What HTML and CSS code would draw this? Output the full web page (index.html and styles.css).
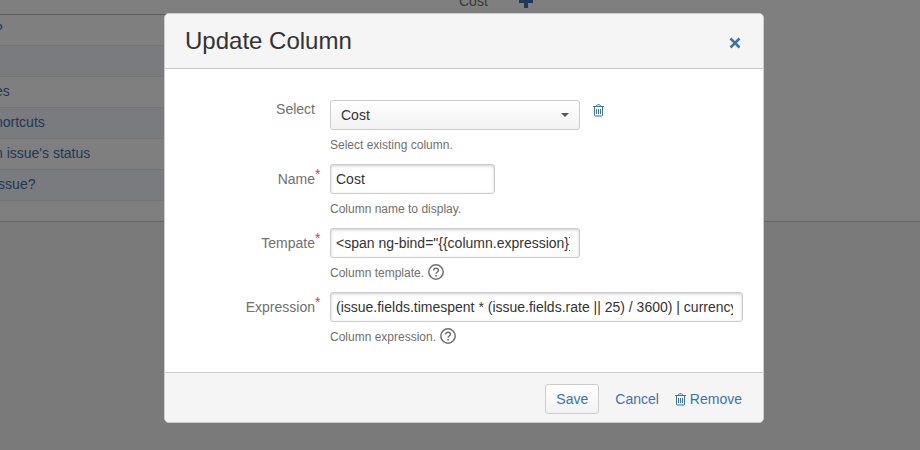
FILE: index.html
```html
<!DOCTYPE html>
<html lang="en">
<head>
<meta charset="utf-8">
<title>Update Column</title>
<link rel="stylesheet" href="styles.css">
</head>
<body>
<svg class="sprite" aria-hidden="true">
  <symbol id="trash" viewBox="0 0 11 13">
    <path d="M3.500 2.500v-1l1-.700h2l1 .700v1M0 2.500h11M1.500 3v8.500l.500.500h7l.500-.500V3M3.500 5v5M5.500 5v5M7.500 5v5" fill="none" stroke="currentColor"/>
  </symbol>
  <symbol id="help" viewBox="0 0 16 16">
    <circle cx="8" cy="8" r="7.200" fill="none" stroke="currentColor" stroke-width="1.500"/>
    <path d="M5.700 6.400C5.700 4.900 6.700 4.200 8 4.200s2.400.8 2.400 2.100c0 1.700-2.300 1.700-2.300 3.500" fill="none" stroke="currentColor" stroke-width="1.500"/>
    <path d="M7.200 10.900h1.700v1.600H7.200z" fill="currentColor"/>
  </symbol>
</svg>

<main class="page">
  <div class="issues-panel">
    <table class="issues">
      <thead>
        <tr>
          <th></th>
          <th class="cost">Cost</th>
          <th>
            <button class="add" type="button" aria-label="Add column">
              <svg width="14" height="14" viewBox="0 0 14 14"><path d="M5 1h4v4h5v4H9v5H5V9H0V5h5z" fill="currentColor"/></svg>
            </button>
          </th>
        </tr>
      </thead>
      <tbody>
        <tr><td><a href="#">?</a></td><td></td><td></td></tr>
        <tr><td></td><td></td><td></td></tr>
        <tr><td><a href="#">es</a></td><td></td><td></td></tr>
        <tr><td><a href="#">hortcuts</a></td><td></td><td></td></tr>
        <tr><td><a href="#">n issue's status</a></td><td></td><td></td></tr>
        <tr><td><a href="#">issue?</a></td><td></td><td></td></tr>
      </tbody>
    </table>
  </div>
</main>

<div class="blanket">
  <section class="dialog" role="dialog" aria-modal="true" aria-labelledby="dialog-title">
    <header class="dialog-header">
      <h2 id="dialog-title">Update Column</h2>
      <button class="close" type="button" aria-label="Close">
        <svg width="12" height="12" viewBox="0 0 12 12"><path d="M1.500 1.500l9 9M10.500 1.500l-9 9" stroke="currentColor" stroke-width="2.500"/></svg>
      </button>
    </header>
    <form id="column-form" class="dialog-body">
      <div class="field">
        <label class="label-top" for="column">Select</label>
        <div class="control">
          <div class="line">
            <div class="select medium">
              <select id="column"><option>Cost</option></select>
            </div>
            <button class="delete" type="button" aria-label="Delete column"><svg width="11" height="13"><use href="#trash"/></svg></button>
          </div>
          <p class="hint">Select existing column.</p>
        </div>
      </div>
      <div class="field">
        <label for="name">Name<span class="required">*</span></label>
        <div class="control">
          <input class="short" id="name" type="text" value="Cost">
          <p class="hint">Column name to display.</p>
        </div>
      </div>
      <div class="field">
        <label for="template">Tempate<span class="required">*</span></label>
        <div class="control">
          <input class="medium" id="template" type="text" value="&lt;span ng-bind=&quot;{{column.expression}}&quot;&gt;&lt;/span&gt;">
          <p class="hint">Column template. <svg width="16" height="16"><use href="#help"/></svg></p>
        </div>
      </div>
      <div class="field">
        <label for="expression">Expression<span class="required">*</span></label>
        <div class="control">
          <input class="full" id="expression" type="text" value="(issue.fields.timespent * (issue.fields.rate || 25) / 3600) | currency">
          <p class="hint">Column expression. <svg width="16" height="16"><use href="#help"/></svg></p>
        </div>
      </div>
    </form>
    <footer class="dialog-footer">
      <button class="save" type="submit" form="column-form">Save</button>
      <a href="#">Cancel</a>
      <a class="remove" href="#"><svg width="11" height="13"><use href="#trash"/></svg>Remove</a>
    </footer>
  </section>
</div>
</body>
</html>
```
FILE: styles.css
```css
* {
  box-sizing: border-box;
}

body {
  margin: 0;
  min-height: 100vh;
  overflow: hidden;
  background: #f5f5f5;
  color: #333;
  font: 14px/20px "Liberation Sans", Arial, sans-serif;
}

button,
input,
select {
  font: inherit;
  color: inherit;
}

button {
  padding: 0;
  border: 0;
  background: none;
}

a {
  color: #3b73af;
  text-decoration: none;
}

svg {
  display: block;
}

.sprite {
  display: none;
}

/* Issue list, scrolled partly out of view */
.issues-panel {
  margin-top: -16px;
  padding-bottom: 20px;
  border-bottom: 1px solid #ccc;
  background: #fff;
}

.issues {
  width: 75%;
  margin-left: -5px;
  border-collapse: separate;
  border-spacing: 0;
  table-layout: fixed;
}

.issues th,
.issues td {
  height: 31px;
  padding: 0 0 2px;
  border-bottom: 1px solid #e8e8e8;
  text-align: left;
}

.issues th {
  width: 60px;
  padding: 4px 0 0;
  border-bottom-color: #bbb;
  color: #707070;
  font-weight: normal;
}

.issues th:first-child {
  width: 464px;
}

.issues th:last-child {
  width: auto;
}

.issues tbody tr:nth-child(even) {
  background: #f5f7ff;
}

.add {
  display: block;
  color: #3b73af;
}

/* Dialog */
.blanket {
  position: fixed;
  inset: 0;
  display: flex;
  justify-content: center;
  align-items: flex-start;
  padding: 13px 0 0 8px;
  background: rgba(0, 0, 0, 0.5);
}

.dialog {
  width: 100%;
  max-width: 600px;
  overflow: hidden;
  border: 1px solid #ccc;
  border-radius: 5px;
  background: #fff;
}

.dialog-header {
  display: flex;
  justify-content: space-between;
  align-items: center;
  padding: 12px 20px;
  border-bottom: 1px solid #ccc;
  background: #f5f5f5;
}

.dialog-header h2 {
  margin: 0;
  font-size: 24px;
  font-weight: normal;
  line-height: 30px;
}

.close {
  padding: 4px 2px 0;
  color: #3b73af;
}

.dialog-body {
  display: grid;
  gap: 10px;
  padding: 31px 20px 26px;
}

.field {
  display: grid;
  grid-template-columns: 130px 1fr;
  gap: 15px;
}

.field label {
  position: relative;
  padding-top: 5px;
  color: #707070;
  text-align: right;
}

.field .label-top {
  padding-top: 0;
  line-height: 18px;
}

.required {
  position: absolute;
  top: 0;
  left: 100%;
  color: #d04437;
}

.line {
  display: flex;
  gap: 13px;
}

.control input {
  display: block;
  height: 30px;
  padding: 4px 9px 4px 5px;
  border: 1px solid #ccc;
  border-radius: 3px;
  background: #fff;
  box-shadow: inset 0 1px 3px #ccc;
}

.short {
  width: 165px;
}

.medium {
  width: 250px;
}

.full {
  width: 100%;
}

.select {
  position: relative;
}

.select select {
  display: block;
  width: 100%;
  height: 30px;
  padding: 4px 10px;
  border: 1px solid #ccc;
  border-radius: 3px;
  appearance: none;
  background: linear-gradient(#fff, #f2f2f2);
}

.select::after {
  content: "";
  position: absolute;
  top: 13px;
  right: 11px;
  border: 4px solid transparent;
  border-top-color: #555;
  border-bottom: 0;
  pointer-events: none;
}

.delete {
  align-self: flex-start;
  padding-top: 4px;
  color: #3b73af;
}

.hint {
  display: flex;
  align-items: center;
  gap: 4px;
  height: 20px;
  margin: 4px 0 0;
  padding-top: 2px;
  color: #707070;
  font-size: 12px;
}

.hint svg {
  margin-bottom: 2px;
}

.dialog-footer {
  display: flex;
  justify-content: flex-end;
  align-items: center;
  gap: 16px;
  padding: 11px 21px 8px;
  border-top: 1px solid #ccc;
  background: #f5f5f5;
}

.save {
  height: 30px;
  padding: 0 10px;
  border: 1px solid #ccc;
  border-radius: 3px;
  background: linear-gradient(#fff, #f2f2f2);
  color: #3b73af;
}

.remove {
  display: flex;
  align-items: center;
  gap: 4px;
}
```
